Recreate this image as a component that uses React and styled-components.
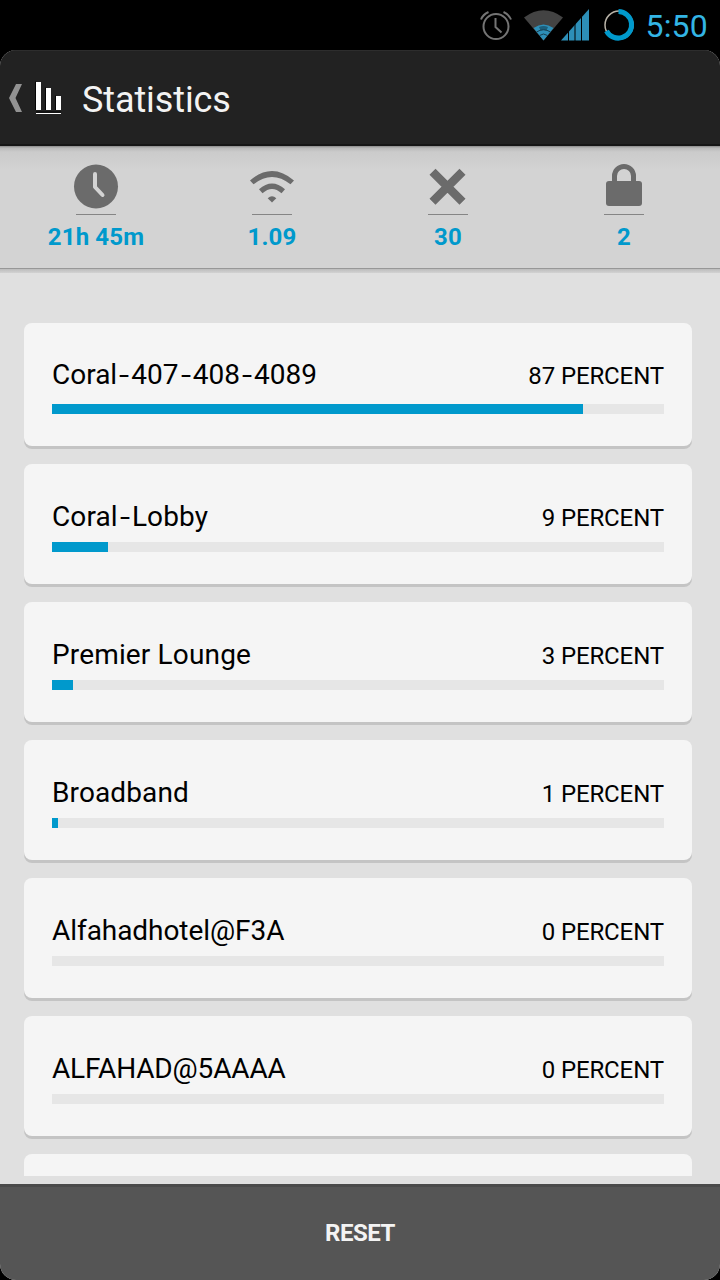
import React from "react";
import styled, { createGlobalStyle } from "styled-components";

const GlobalStyle = createGlobalStyle`
  body {
    margin: 0;
    background: #000;
    font-family: Roboto, sans-serif;
  }
`;

const Phone = styled.div`
  display: flex;
  flex-direction: column;
  width: 720px;
  height: 1280px;
  background: #000;
  overflow: hidden;
`;

const StatusBar = styled.div`
  display: flex;
  flex: none;
  height: 50px;
  justify-content: flex-end;
  align-items: center;
`;

const StatusIcons = styled.svg`
  display: block;
  width: 164px;
  height: 50px;
`;

const Time = styled.span`
  width: 66px;
  margin: 2px 12px 0 2px;
  font-size: 32px;
  line-height: 36px;
  color: #33b5e5;
  letter-spacing: 0.2px;
  text-align: right;
  white-space: nowrap;
`;

const Screen = styled.div`
  display: flex;
  flex: 1;
  flex-direction: column;
  min-height: 0;
  background: #e0e0e0;
  border-radius: 16px;
  overflow: hidden;
`;

const Header = styled.div`
  display: flex;
  flex: none;
  box-sizing: border-box;
  height: 96px;
  align-items: center;
  background: #222;
  border-top: 1px solid #2d2d2d;
  border-bottom: 2px solid #161616;
`;

const HeaderIcon = styled.svg`
  display: block;
  width: 82px;
  height: 93px;
`;

const Title = styled.h1`
  margin: 5px 0 0;
  font-size: 36px;
  font-weight: 400;
  line-height: 42px;
  letter-spacing: -0.1px;
  color: #f3f3f3;
`;

const Stats = styled.div`
  display: grid;
  flex: none;
  grid-template-columns: repeat(4, 176px);
  box-sizing: border-box;
  height: 127px;
  padding: 16px 8px 0;
  background: linear-gradient(
    #8a8a8a 0,
    #bababa 2px,
    #cbcbcb 6px,
    #d3d3d3 24px,
    #d3d3d3 122px,
    #979797 122px,
    #979797 123px,
    #bcbcbc 123px,
    #d2d2d2 127px
  );
`;

const Stat = styled.div`
  display: flex;
  flex-direction: column;
  align-items: center;
`;

const StatIcon = styled.svg`
  display: block;
  width: 48px;
  height: 48px;
  fill: #6b6b6b;
`;

const Rule = styled.div`
  width: 40px;
  height: 1px;
  margin: 4px 0 8px;
  background: #858585;
`;

const StatValue = styled.span`
  font-size: 24px;
  font-weight: 700;
  line-height: 28px;
  letter-spacing: 0.15px;
  color: #0099cc;
`;

const List = styled.div`
  display: flex;
  flex: 1;
  flex-direction: column;
  gap: 18px;
  min-height: 0;
  margin-bottom: 8px;
  padding: 50px 28px 0 24px;
  overflow: hidden;
`;

const Card = styled.div`
  flex: none;
  box-sizing: border-box;
  height: ${props => (props.$first ? 123 : 120)}px;
  padding: ${props => (props.$first ? 35 : 36)}px 28px 0;
  background: #f5f5f5;
  border-radius: 8px;
  box-shadow: 0 3px 0 #c4c4c4;
`;

const CardRow = styled.div`
  display: flex;
  height: ${props => (props.$first ? 46 : 42)}px;
  justify-content: space-between;
  align-items: baseline;
  line-height: 33px;
  color: #000;
  white-space: nowrap;
`;

const Name = styled.span`
  font-size: 28px;
  letter-spacing: ${props => props.$spacing || 0}px;
`;

const Hyphen = styled.span`
  display: inline-block;
  padding: 0 3.2px;
  transform: scaleX(1.3);
`;

const Percent = styled.span`
  font-size: 24px;
  letter-spacing: -0.12px;
`;

const Track = styled.div`
  height: 10px;
  background: #e6e6e6;
`;

const Fill = styled.div`
  height: 10px;
  background: #0099cc;
`;

const Footer = styled.button`
  flex: none;
  height: 96px;
  padding: 0 0 2px;
  background: #555;
  border: 0;
  border-top: 3px solid #4a4a4a;
  font-family: inherit;
  font-size: 24px;
  font-weight: 700;
  letter-spacing: -0.5px;
  color: #f3f3f3;
`;

const networks = [
  { name: "Coral-407-408-4089", percent: 87, fill: 531 },
  { name: "Coral-Lobby", percent: 9, fill: 56, spacing: 0.1 },
  { name: "Premier Lounge", percent: 3, fill: 21, spacing: 0.15 },
  { name: "Broadband", percent: 1, fill: 6, spacing: 0.12 },
  { name: "Alfahadhotel@F3A", percent: 0, fill: 0, spacing: -0.06 },
  { name: "ALFAHAD@5AAAA", percent: 0, fill: 0, spacing: -0.15 }
];

const Clock = () => (
  <StatIcon viewBox="0 0 48 48">
    <circle cx="24" cy="24.500" r="22" />
    <path
      d="M23 12v13l7.500 8"
      fill="none"
      stroke="#d3d3d3"
      strokeWidth="4"
      strokeLinecap="round"
      strokeLinejoin="round"
    />
  </StatIcon>
);

const Wifi = () => (
  <StatIcon viewBox="0 0 48 48">
    <path d="M2 18.500Q24 -.5 46 18.500L42.500 22.300Q24 7.500 5.500 22.300Z" />
    <path d="M11 27.300Q24 15.500 37 27.300L33.500 31.300Q24 22.500 14.500 31.300Z" />
    <path d="M19.700 36.200Q24 32.500 28.300 36.200L24 40.500Z" />
  </StatIcon>
);

const Cross = () => (
  <StatIcon viewBox="0 0 48 48">
    <path
      d="M8.500 9.500L38.500 39.500M38.500 9.500L8.500 39.500"
      transform="translate(0 .2)"
      stroke="#6b6b6b"
      strokeWidth="8.500"
    />
  </StatIcon>
);

const Lock = () => (
  <StatIcon viewBox="0 0 48 48">
    <path d="M14.500 22V14a9.500 9.500 0 0 1 19 0V22" fill="none" stroke="#6b6b6b" strokeWidth="5" />
    <rect x="6" y="19" width="36" height="25" rx="3" />
  </StatIcon>
);

const renderName = name =>
  name.split("-").map((part, i) => (
    <React.Fragment key={i}>
      {i > 0 && <Hyphen>-</Hyphen>}
      {part}
    </React.Fragment>
  ));

class App extends React.Component {
  render() {
    return (
      <Phone>
        <GlobalStyle />
        <StatusBar>
          <StatusIcons viewBox="476 0 164 50">
            <g fill="none" stroke="#747474" strokeWidth="2">
              <circle cx="496" cy="26.500" r="12.500" />
              <path d="M495.500 18v9l6 5.500" />
              <path d="M481 19.500q2-5 7.500-7.500M503.500 12q5.500 2.500 7.500 7.500" />
            </g>
            <path d="M524 17.500Q543.500 3 563 17.500L543.500 40.500Z" fill="#434343" />
            <path d="M533.500 28Q543.500 21 553.500 28L543.500 40.500Z" fill="#2d8fb8" />
            <path d="M539 27Q543.500 25 548 27L546.500 30.500Q543.500 29 540.500 30.500Z" fill="#1c5f7c" />
            <path
              d="M536.500 32Q543.500 27.500 550.500 32M539.500 35.500Q543.500 32.500 547.500 35.500"
              fill="none"
              stroke="#163e50"
            />
            <path d="M561 40.500L589 9V40.500Z" fill="#2d8fb8" />
            <path d="M568.500 30v11M575 22v19M581.500 14v27" stroke="#000" />
            <circle cx="619" cy="25" r="14" fill="none" stroke="#b9b3a8" strokeWidth="1.500" />
            <path
              d="M618.500 11.500A13.300 13.300 0 1 1 606.500 31"
              fill="none"
              stroke="#0099cc"
              strokeWidth="5"
            />
          </StatusIcons>
          <Time>5:50</Time>
        </StatusBar>
        <Screen>
          <Header>
            <HeaderIcon viewBox="0 51 82 93">
              <path d="M16 84h6l-6.500 14 6.500 14h-6L9 98z" fill="#929292" />
              <g fill="#fff">
                <path d="M36 82h5v28h-5zM46 88h5v22h-5zM56 96h5v14h-5z" />
              </g>
              <path d="M35.500 110V81.500M45.500 110V87.500M55.500 110V95.500M36 112h25" stroke="#050505" />
              <path d="M36 113.500h25" stroke="#fff" />
            </HeaderIcon>
            <Title>Statistics</Title>
          </Header>
          <Stats>
            <Stat>
              <Clock />
              <Rule />
              <StatValue>21h 45m</StatValue>
            </Stat>
            <Stat>
              <Wifi />
              <Rule />
              <StatValue>1.09</StatValue>
            </Stat>
            <Stat>
              <Cross />
              <Rule />
              <StatValue>30</StatValue>
            </Stat>
            <Stat>
              <Lock />
              <Rule />
              <StatValue>2</StatValue>
            </Stat>
          </Stats>
          <List>
            {networks.map((network, i) => (
              <Card key={network.name} $first={i === 0}>
                <CardRow $first={i === 0}>
                  <Name $spacing={network.spacing}>{renderName(network.name)}</Name>
                  <Percent>{network.percent} PERCENT</Percent>
                </CardRow>
                <Track>
                  <Fill style={{ width: network.fill }} />
                </Track>
              </Card>
            ))}
            <Card />
          </List>
          <Footer>RESET</Footer>
        </Screen>
      </Phone>
    );
  }
}

export default App;
